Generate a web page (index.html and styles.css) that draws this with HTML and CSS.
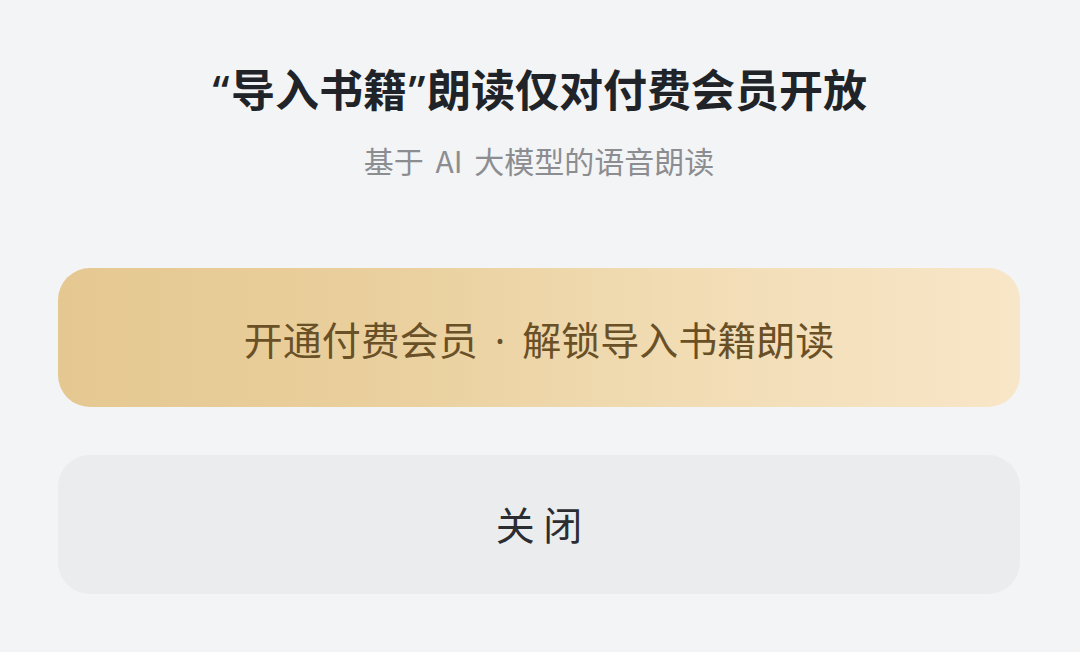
FILE: index.html
```html
<!DOCTYPE html>
<html lang="zh-CN">
<head>
    <meta charset="UTF-8">
    <meta name="viewport" content="width=device-width, initial-scale=1.0">
    <title>导入书籍朗读</title>
    <link rel="stylesheet" href="styles.css">
</head>
<body>
    <div class="sheet">
        <h2 class="title"><span class="quote">“</span>导入书籍<span class="quote">”</span>朗读仅对付费会员开放</h2>
        <p class="subtitle">基于 AI 大模型的语音朗读</p>

        <div class="actions">
            <button class="btn btn-vip">开通付费会员<span class="dot">·</span>解锁导入书籍朗读</button>
            <button class="btn btn-close">关 闭</button>
        </div>
    </div>
</body>
</html>
```

FILE: styles.css
```css
* {
    margin: 0;
    padding: 0;
    box-sizing: border-box;
    font-family: "Noto Sans CJK SC", "Noto Sans", sans-serif;
}

body {
    background: #f3f4f6;
    width: 1080px;
    height: 652px;
    overflow: hidden;
}

.sheet {
    padding: 60px 60px 0 58px;
    text-align: center;
}

.title {
    font-size: 44px;
    font-weight: 700;
    color: #202327;
    line-height: 56px;
}

.quote {
    font-family: "Noto Sans", sans-serif;
    font-weight: 500;
    display: inline-block;
    width: 20px;
}

.subtitle {
    margin-top: 22px;
    font-size: 30px;
    color: #8b8d91;
    line-height: 40px;
    word-spacing: 5px;
}

.actions {
    margin-top: 88px;
    display: flex;
    flex-direction: column;
    gap: 48px;
}

.btn {
    height: 139px;
    border: none;
    border-radius: 32px;
    font-size: 39px;
    cursor: pointer;
}

.btn-vip {
    background: linear-gradient(90deg, #e5c891 0%, #ead09e 35%, #f1dcb4 65%, #f8e6c8 100%);
    color: #6a5027;
}

.dot {
    font-family: "Noto Sans", sans-serif;
    padding: 0 17px;
}

.btn-close {
    background: #ebecee;
    color: #2b2d31;
    padding-bottom: 4px;
}
```
